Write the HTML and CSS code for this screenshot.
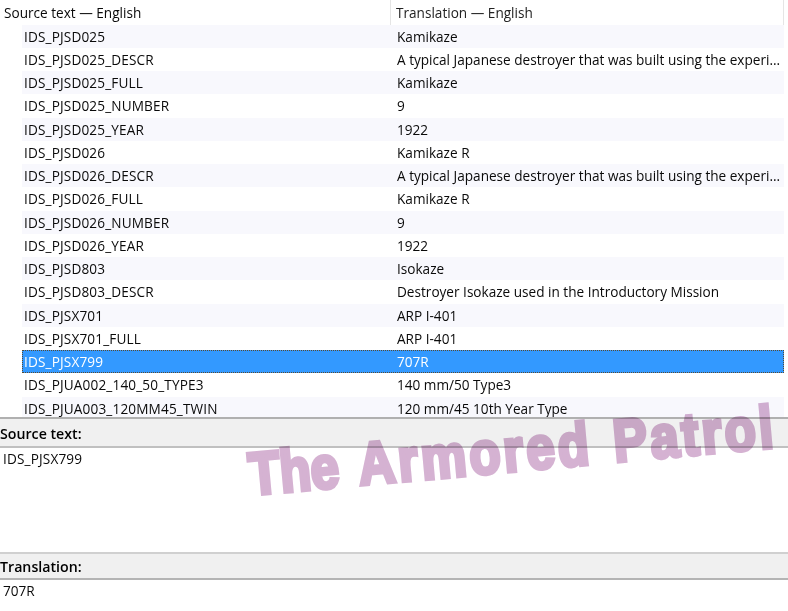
FILE: index.html
```html
<!DOCTYPE html>
<html lang="en">
<head>
<meta charset="utf-8">
<title>Translation editor</title>
<link rel="stylesheet" href="styles.css">
</head>
<body>
<div class="app">
  <section class="list">
    <div class="head">
      <div class="hcell hsrc">Source text — English</div>
      <div class="hcell htr">Translation — English</div>
    </div>
    <div class="rows">
      <div class="row alt"><span class="src">IDS_PJSD025</span><span class="tr">Kamikaze</span></div>
      <div class="row"><span class="src">IDS_PJSD025_DESCR</span><span class="tr">A typical Japanese destroyer that was built using the experi...</span></div>
      <div class="row alt"><span class="src">IDS_PJSD025_FULL</span><span class="tr">Kamikaze</span></div>
      <div class="row"><span class="src">IDS_PJSD025_NUMBER</span><span class="tr">9</span></div>
      <div class="row alt"><span class="src">IDS_PJSD025_YEAR</span><span class="tr">1922</span></div>
      <div class="row"><span class="src">IDS_PJSD026</span><span class="tr">Kamikaze R</span></div>
      <div class="row alt"><span class="src">IDS_PJSD026_DESCR</span><span class="tr">A typical Japanese destroyer that was built using the experi...</span></div>
      <div class="row"><span class="src">IDS_PJSD026_FULL</span><span class="tr">Kamikaze R</span></div>
      <div class="row alt"><span class="src">IDS_PJSD026_NUMBER</span><span class="tr">9</span></div>
      <div class="row"><span class="src">IDS_PJSD026_YEAR</span><span class="tr">1922</span></div>
      <div class="row alt"><span class="src">IDS_PJSD803</span><span class="tr">Isokaze</span></div>
      <div class="row"><span class="src">IDS_PJSD803_DESCR</span><span class="tr">Destroyer Isokaze used in the Introductory Mission</span></div>
      <div class="row alt"><span class="src">IDS_PJSX701</span><span class="tr">ARP I-401</span></div>
      <div class="row"><span class="src">IDS_PJSX701_FULL</span><span class="tr">ARP I-401</span></div>
      <div class="row selected"><span class="src">IDS_PJSX799</span><span class="tr">707R</span></div>
      <div class="row"><span class="src">IDS_PJUA002_140_50_TYPE3</span><span class="tr">140 mm/50 Type3</span></div>
      <div class="row alt"><span class="src">IDS_PJUA003_120MM45_TWIN</span><span class="tr">120 mm/45 10th Year Type</span></div>
    </div>
  </section>
  <section class="pane pane-source">
    <div class="bar">Source text:</div>
    <div class="body src-value">IDS_PJSX799</div>
  </section>
  <section class="pane pane-trans">
    <div class="bar">Translation:</div>
    <div class="body">707R</div>
  </section>
  <div class="watermark"><span class="wm-first">The</span> Armored Patrol</div>
</div>
</body>
</html>
```
FILE: styles.css
```css
* { box-sizing: border-box; }
html, body { margin: 0; padding: 0; }
body {
  width: 788px;
  height: 611px;
  overflow: hidden;
  background: #fff;
  color: #0a0a0a;
  font-family: "Open Sans", "Noto Sans", sans-serif;
  font-size: 13.6px;
}
.app {
  position: relative;
  width: 788px;
  height: 611px;
  display: flex;
  flex-direction: column;
  overflow: hidden;
}
.list { height: 417px; overflow: hidden; flex: none; }
.head { display: flex; height: 24.6px; }
.hcell { line-height: 25.5px; white-space: nowrap; }
.hsrc { width: 391px; padding-left: 4px; border-right: 1px solid #e5e5e5; }
.htr { width: 393px; padding-left: 5px; border-right: 1px solid #e5e5e5; color: #222; }
.rows { margin-left: 22px; width: 762px; }
.row { display: flex; height: 23.25px; line-height: 24px; white-space: nowrap; }
.row.alt { background: #f8f8fd; }
.row.selected { background: #3399ff; color: #fff; outline: 1px dotted #5a4a30; outline-offset: -1px; }
.src { width: 370px; padding-left: 2px; letter-spacing: 0.15px; }
.src-value { letter-spacing: 0.15px; }
.tr { flex: 1; padding-left: 5px; }
.pane { display: flex; flex-direction: column; flex: none; }
.pane-source { height: 135px; }
.pane-trans { flex: 1; }
.bar {
  height: 31px;
  flex: none;
  padding-left: 0;
  background: #f0f0f0;
  border-top: 2px solid #b0b0b0;
  border-bottom: 2px solid #c0c0c0;
  font-weight: 600;
  font-size: 14.2px;
  line-height: 30px;
  color: #000;
}
.pane-trans .bar { height: 28px; border-top-color: #d0d0d0; border-bottom-color: #b4b4b4; line-height: 26px; }
.body { padding-left: 3px; line-height: 22px; }
.watermark {
  position: absolute;
  left: 252px;
  top: 442px;
  color: #d5b2d2;
  mix-blend-mode: multiply;
  font-family: "Liberation Sans", sans-serif;
  font-weight: 700;
  font-size: 60px;
  line-height: 66px;
  white-space: nowrap;
  letter-spacing: 3.7px;
  word-spacing: 5px;
  -webkit-text-stroke: 4px #d5b2d2;
  transform-origin: 0 100%;
  transform: rotate(-5.2deg) scaleX(0.85);
}
.wm-first { letter-spacing: -0.3px; }
```
